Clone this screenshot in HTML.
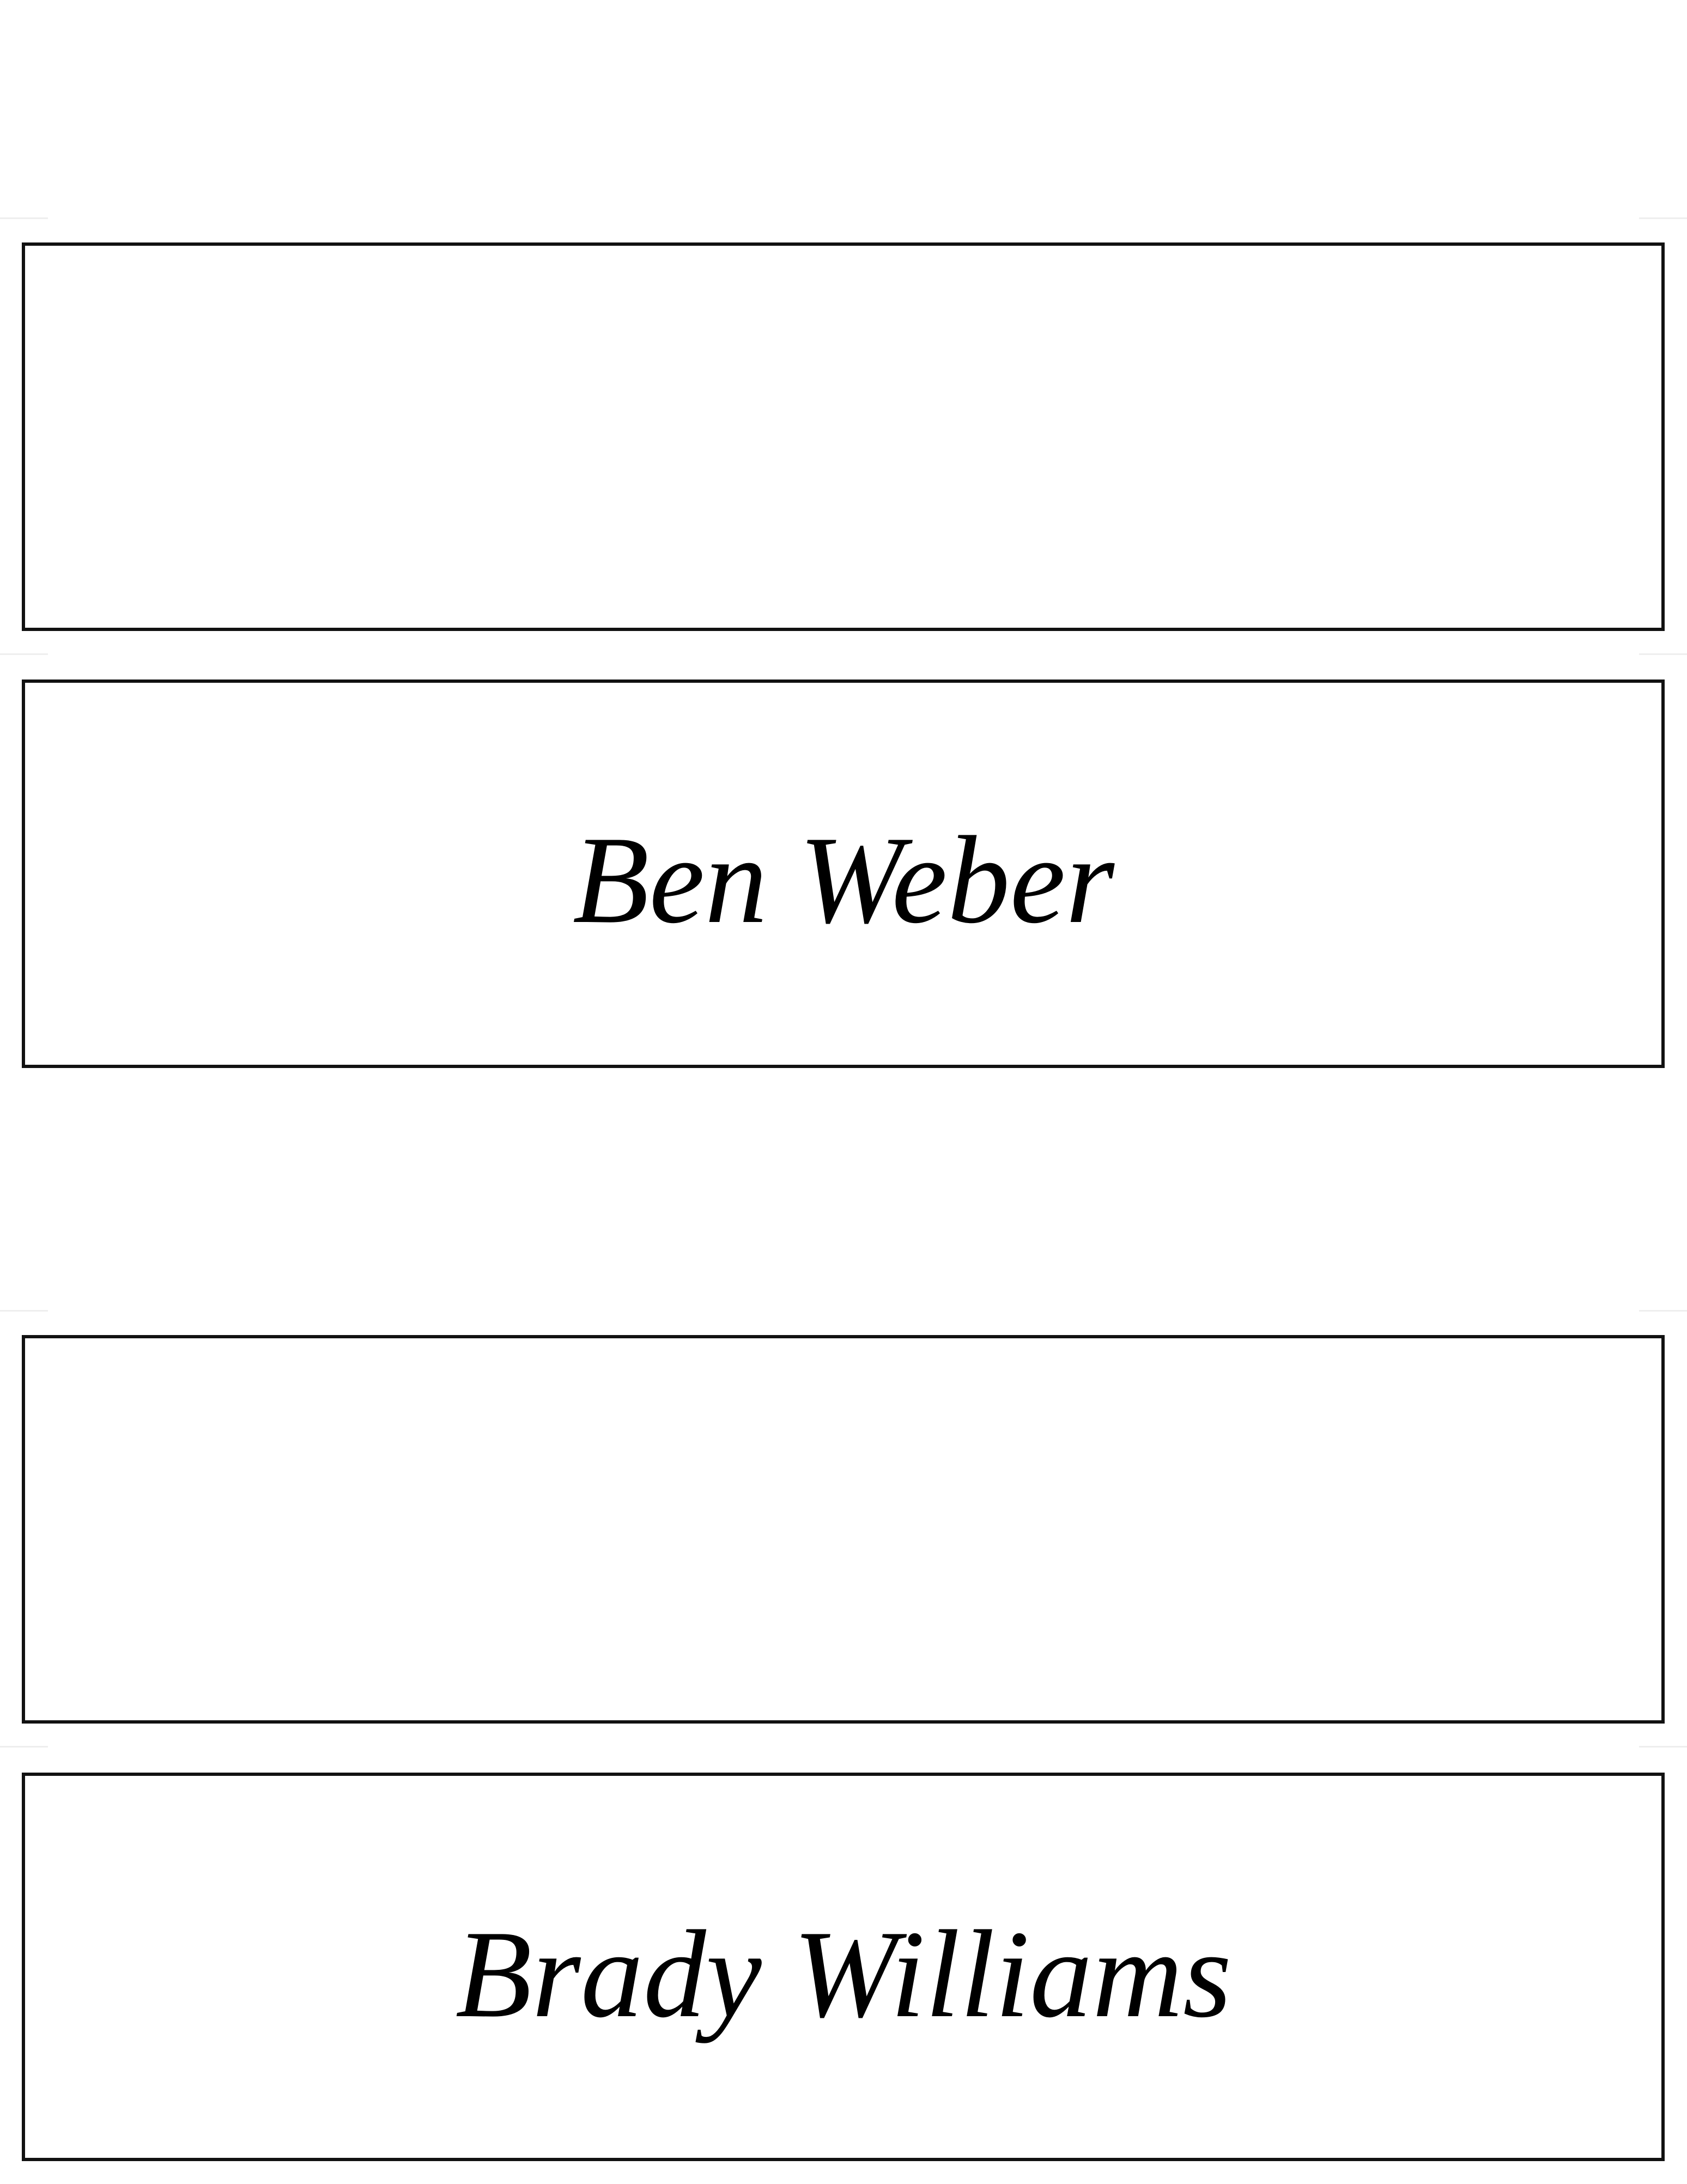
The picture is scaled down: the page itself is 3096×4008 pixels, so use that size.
<!DOCTYPE html>
<html><head><meta charset="utf-8"><style>
html,body{margin:0;padding:0;background:#fff;}
body{width:3096px;height:4008px;position:relative;overflow:hidden;}
.box{position:absolute;left:40px;width:3003px;height:701px;border:6px solid #111;}
.tick{position:absolute;height:3px;background:#eee;width:88px;}
.name{position:absolute;left:0;width:3096px;text-align:center;font-family:"Liberation Serif",serif;font-style:italic;color:#000;line-height:1;}
</style></head><body>
<div class="tick" style="left:0;top:399px"></div><div class="tick" style="left:3008px;top:399px"></div>
<div class="tick" style="left:0;top:1199px"></div><div class="tick" style="left:3008px;top:1199px"></div>
<div class="tick" style="left:0;top:2404px"></div><div class="tick" style="left:3008px;top:2404px"></div>
<div class="tick" style="left:0;top:3204px"></div><div class="tick" style="left:3008px;top:3204px"></div>
<div class="box" style="top:445px"></div>
<div class="box" style="top:1247px"></div>
<div class="box" style="top:2450px"></div>
<div class="box" style="top:3253px"></div>
<div class="name" style="top:1500px;font-size:230px;">Ben Weber</div>
<div class="name" style="top:3508px;font-size:230px;">Brady Williams</div>
</body></html>
